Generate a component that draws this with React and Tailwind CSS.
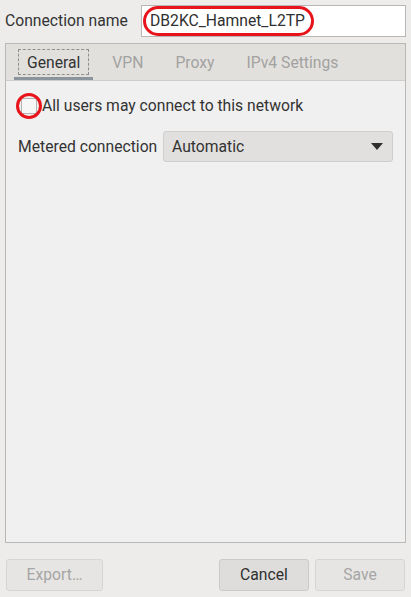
const font = { fontFamily: "Roboto, 'Liberation Sans', sans-serif" };

const Tab = ({ label, active }) => (
  <div className="relative flex h-full items-center px-[13px] pt-[2px]">
    {active && (
      <>
        <div className="absolute left-[4px] right-[4px] top-[5px] bottom-[5px] border border-dashed border-[#8f8f8f]" />
        <div className="absolute left-0 right-0 bottom-0 h-[3px] bg-[#8b939c]" />
      </>
    )}
    <span className={active ? "text-[#333333]" : "text-[#a2a2a0]"}>{label}</span>
  </div>
);

const Button = ({ label, disabled, className }) => (
  <div
    className={`flex h-[32px] items-center justify-center rounded-[3px] border ${
      disabled
        ? "border-[#d6d5d3] bg-[#e6e5e3] text-[#a5a5a5]"
        : "border-[#cbcac8] bg-[#dedddb] text-[#2f2f2f]"
    } ${className}`}
  >
    {label}
  </div>
);

export default function App() {
  return (
    <div
      className="flex h-[597px] w-[411px] flex-col bg-[#edeceb] px-[5px] pt-[5px] text-[15.7px] text-[#333333]"
      style={font}
    >
      {/* connection name row */}
      <div className="flex h-[32px] items-center">
        <span className="w-[136px] shrink-0">Connection name</span>
        <div className="relative flex h-[32px] flex-1 items-center border border-[#b8b7b5] bg-white pl-[8px]">
          <span className="text-[#2f2f2f]">DB2KC_Hamnet_L2TP</span>
          <div className="absolute left-[1px] top-[0px] h-[30px] w-[171px] rounded-full border-[3px] border-[#e8141b]" />
        </div>
      </div>

      {/* notebook */}
      <div className="mt-[6px] flex h-[500px] flex-col border border-[#b9b8b6] bg-[#f0f0f0]">
        <div className="flex h-[37px] shrink-0 gap-[6px] border-b border-[#cfcdca] bg-[#e2e0dd] pl-[8px]">
          <Tab label="General" active />
          <Tab label="VPN" />
          <Tab label="Proxy" />
          <Tab label="IPv4 Settings" />
        </div>

        <div className="flex flex-col px-[12px] pt-[16px]">
          <div className="relative flex h-[18px] items-center">
            <div className="ml-[3px] h-[16px] w-[16px] rounded-[2px] border border-[#b3b3b1] bg-[#f7f7f7]" />
            <span className="ml-[5px]">All users may connect to this network</span>
            <div className="absolute left-[-2px] top-[-4px] h-[26px] w-[26px] rounded-full border-[3px] border-[#e8141b]" />
          </div>

          <div className="mt-[16px] flex h-[31px] items-center">
            <span className="w-[145px] shrink-0">Metered connection</span>
            <div className="flex h-[31px] flex-1 items-center justify-between rounded-[3px] border border-[#cfcecc] bg-[#e1e0de] pl-[8px] pr-[9px]">
              <span className="text-[#333333]">Automatic</span>
              <svg width="12" height="7" viewBox="0 0 12 7">
                <path d="M0 0 L12 0 L6 7 Z" fill="#2f2f2f" />
              </svg>
            </div>
          </div>
        </div>
      </div>

      {/* buttons */}
      <div className="mt-[16px] flex items-center">
        <Button label="Export…" disabled className="ml-[1px] w-[97px]" />
        <div className="flex-1" />
        <Button label="Cancel" className="w-[90px]" />
        <Button label="Save" disabled className="ml-[6px] w-[90px] mr-[1px]" />
      </div>
    </div>
  );
}
